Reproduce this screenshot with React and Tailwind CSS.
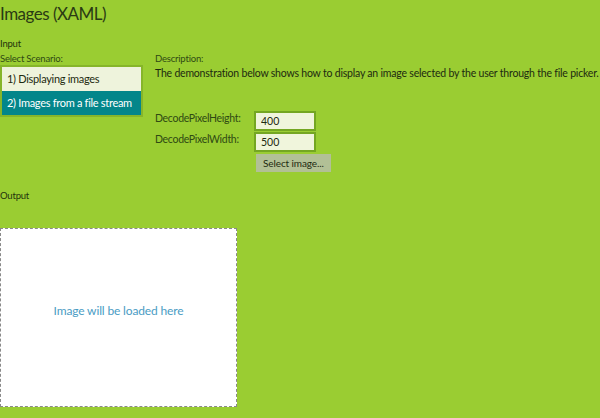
import React, { useState } from 'react'

const scenarios = ['1) Displaying images', '2) Images from a file stream']

function ScenarioList({ selected, onSelect }) {
  return (
    <div className="w-[143px] border-2 border-[#86b52a]">
      {scenarios.map((name, i) => (
        <button
          key={name}
          onClick={() => onSelect(i)}
          className={
            i === selected
              ? 'block w-full h-[24px] pl-[5px] text-left text-[11px] tracking-[-0.3px] whitespace-nowrap text-white bg-[#03868a]'
              : 'block w-full h-[24px] pl-[5px] text-left text-[11px] tracking-[-0.3px] whitespace-nowrap text-[#1d2a10] bg-[#eef3dc]'
          }
        >
          {name}
        </button>
      ))}
    </div>
  )
}

function Field({ label, value }) {
  return (
    <div className="flex items-start h-[20px]">
      <span className="w-[99px] text-[10.5px] leading-[14px] tracking-[-0.3px] text-[#2f4a12]">{label}</span>
      <input
        readOnly
        value={value}
        className="w-[62px] h-[20px] px-[5px] border-2 border-[#74a622] bg-[#f0f5dc] text-[10.5px] text-[#1d2a10] outline-none"
      />
    </div>
  )
}

export default function App() {
  const [selected, setSelected] = useState(1)

  return (
    <div
      className="w-[600px] h-[418px] overflow-hidden bg-[#9acd32] text-[#23330d]"
      style={{ fontFamily: 'Lato, "Noto Sans", sans-serif' }}
    >
      <h1 className="pt-[2px] text-[17px] leading-[23px] tracking-[-0.5px] text-[#2a3b14]">Images (XAML)</h1>

      <div className="mt-[13px] text-[9.5px] leading-[12px] tracking-[-0.2px]">Input</div>

      <div className="flex mt-[3px]">
        <div>
          <div className="text-[9.5px] leading-[12px] tracking-[-0.2px] text-[#2f4a12]">Select Scenario:</div>
          <ScenarioList selected={selected} onSelect={setSelected} />
        </div>

        <div className="ml-[12px]">
          <div className="text-[9.5px] leading-[12px] tracking-[-0.2px] text-[#2f4a12]">Description:</div>
          <p className="mt-[1px] text-[10.5px] leading-[14px] tracking-[-0.2px] whitespace-nowrap text-[#1d2a10]">
            The demonstration below shows how to display an image selected by the user through the file picker.
          </p>

          <div className="mt-[31px] flex flex-col gap-[1px]">
            <Field label="DecodePixelHeight:" value="400" />
            <Field label="DecodePixelWidth:" value="500" />
          </div>
          <button className="block ml-[101px] mt-[2px] h-[18px] px-[7px] bg-[#b2c096] text-[10px] tracking-[-0.1px] text-[#1d2a10]">
            Select image...
          </button>
        </div>
      </div>

      <div className="mt-[18px] text-[9.5px] leading-[12px] tracking-[-0.2px]">Output</div>

      <div className="mt-[26px] w-[237px] h-[179px] pb-[14px] flex items-center justify-center border border-dashed border-[#8a8a8a] bg-white">
        <span className="text-[12px] tracking-[-0.15px] text-[#4a9cc4]">Image will be loaded here</span>
      </div>
    </div>
  )
}
